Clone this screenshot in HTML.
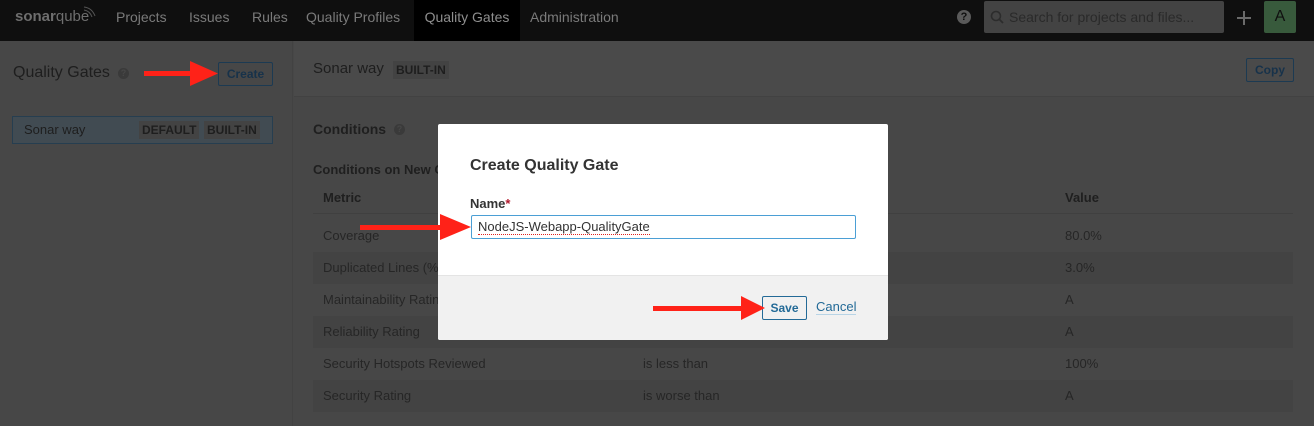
<!DOCTYPE html>
<html style="background:#474747"><head><meta charset="utf-8"><style>
*{box-sizing:border-box;margin:0;padding:0}
html,body{background:#474747}
body{width:1314px;height:426px;overflow:hidden;font-family:"Liberation Sans",Arial,sans-serif;font-size:13px;color:#1f1f1f;position:relative}
.bg{position:absolute;left:0;top:0;width:1314px;height:426px;background:#474747}
.top{position:absolute;left:0;top:0;width:1314px;height:41px;background:#0f0f0f}
.nav{position:absolute;top:0;height:41px;line-height:34px;font-size:14px;color:#7a7a7a}
.abs{position:absolute}
.side{position:absolute;left:0;top:41px;width:293px;height:385px;background:#474747;border-right:1px solid #424242}
.hdr{position:absolute;left:294px;top:41px;width:1020px;height:56px;background:#4a4a4a;border-bottom:1px solid #424242}
.tag{position:absolute;background:#434343;font-weight:bold;font-size:12px;padding:2px 3px;color:#1e1e1e}
.row{position:absolute;left:313px;width:980px;height:32px;line-height:32px}
.row span{position:absolute}
.dark{background:#434343}
.q{position:absolute;width:11px;height:11px;border-radius:50%;background:#3a3a3a;color:#474747;font-size:9px;font-weight:bold;text-align:center;line-height:11px}
.modal{position:absolute;left:438px;top:124px;width:450px;height:216px;background:#fff;border-radius:2px;overflow:hidden}
.foot{position:absolute;left:0;top:151px;width:450px;height:65px;background:#f1f1f1;border-top:1px solid #e4e4e4}
</style></head><body>
<div class="bg"></div>
<div class="top"></div>
<div class="nav" style="left:15px;font-weight:bold;color:#6e6e6e;font-size:15px">sonar<span style="font-weight:normal">qube</span></div>
<svg class="abs" style="left:82px;top:4px" width="16" height="16"><path d="M2 3 Q10 4 13 12 M2 6 Q8 7 10 13" stroke="#555" fill="none"/></svg>
<div class="nav" style="left:116px">Projects</div>
<div class="nav" style="left:189px">Issues</div>
<div class="nav" style="left:252px">Rules</div>
<div class="nav" style="left:306px">Quality Profiles</div>
<div class="nav" style="left:414px;width:106px;background:#000;color:#8e8e8e;text-align:center">Quality Gates</div>
<div class="nav" style="left:530px">Administration</div>
<div class="abs" style="left:957px;top:10px;width:14px;height:14px;border-radius:50%;background:#5a5a5a;color:#0f0f0f;font-size:11px;font-weight:bold;text-align:center;line-height:14px">?</div>
<div class="abs" style="left:984px;top:1px;width:240px;height:32px;background:#434343;border-radius:2px;color:#2a2a2a;font-size:14px;line-height:32px;padding-left:25px">Search for projects and files...</div>
<svg class="abs" style="left:990px;top:10px" width="14" height="14"><circle cx="6" cy="6" r="4.5" stroke="#2c2c2c" stroke-width="1.6" fill="none"/><path d="M9 9 L13 13" stroke="#2c2c2c" stroke-width="1.8"/></svg>
<svg class="abs" style="left:1236px;top:10px" width="16" height="16"><path d="M8 1V15M1 8H15" stroke="#6a6a6a" stroke-width="2"/></svg>
<div class="abs" style="left:1264px;top:1px;width:32px;height:32px;background:#385a3c;border-radius:2px;color:#101010;font-size:16px;text-align:center;line-height:32px">A</div>

<div class="side"></div>
<div class="hdr"></div>
<div class="abs" style="left:13px;top:64px;font-size:16px;color:#1e1e1e">Quality Gates</div>
<div class="q" style="left:118px;top:68px">?</div>
<div class="abs" style="left:218px;top:62px;width:55px;height:24px;border:1px solid #1c3a52;border-radius:2px;color:#17324a;font-weight:bold;font-size:12px;text-align:center;line-height:22px">Create</div>
<div class="abs" style="left:12px;top:116px;width:261px;height:28px;border:1px solid #263e50;background:#414b52"></div>
<div class="abs" style="left:24px;top:122px;color:#1e1e1e">Sonar way</div>
<div class="tag" style="left:139px;top:121px">DEFAULT</div>
<div class="tag" style="left:204px;top:121px">BUILT-IN</div>

<div class="abs" style="left:313px;top:60px;font-size:15px;color:#1e1e1e">Sonar way</div>
<div class="tag" style="left:393px;top:61px">BUILT-IN</div>
<div class="abs" style="left:1246px;top:58px;width:48px;height:24px;border:1px solid #1c3a52;border-radius:2px;color:#17324a;font-weight:bold;font-size:12px;text-align:center;line-height:22px">Copy</div>

<div class="abs" style="left:313px;top:121px;font-size:14px;font-weight:bold">Conditions</div>
<div class="q" style="left:394px;top:124px">?</div>
<div class="abs" style="left:313px;top:162px;font-weight:bold">Conditions on New Code</div>
<div class="row" style="top:182px;border-bottom:1px solid #404040;font-weight:bold"><span style="left:10px">Metric</span><span style="left:752px">Value</span></div>
<div class="row" style="top:220px;color:#262626"><span style="left:10px">Coverage</span><span style="left:752px">80.0%</span></div>
<div class="row dark" style="top:252px;color:#262626"><span style="left:10px">Duplicated Lines (%)</span><span style="left:752px">3.0%</span></div>
<div class="row" style="top:284px;color:#262626"><span style="left:10px">Maintainability Rating</span><span style="left:752px">A</span></div>
<div class="row dark" style="top:316px;color:#262626"><span style="left:10px">Reliability Rating</span><span style="left:752px">A</span></div>
<div class="row" style="top:348px;color:#262626"><span style="left:10px">Security Hotspots Reviewed</span><span style="left:330px">is less than</span><span style="left:752px">100%</span></div>
<div class="row dark" style="top:380px;color:#262626"><span style="left:10px">Security Rating</span><span style="left:330px">is worse than</span><span style="left:752px">A</span></div>

<div class="modal">
 <div class="abs" style="left:32px;top:33px;font-size:16px;font-weight:bold;color:#333">Create Quality Gate</div>
 <div class="abs" style="left:32px;top:72px;font-weight:bold;color:#333">Name<span style="color:#b0182c">*</span></div>
 <div class="abs" style="left:33px;top:91px;width:385px;height:24px;border:1px solid #4b9fd5;border-radius:2px;padding-left:6px;line-height:22px;color:#333"><span style="border-bottom:1px dotted #e02020">NodeJS-Webapp-QualityGate</span></div>
 <div class="foot">
  <div class="abs" style="left:324px;top:20px;width:45px;height:24px;border:1px solid #236a97;border-radius:2px;color:#236a97;font-weight:bold;font-size:12px;text-align:center;line-height:22px">Save</div>
  <div class="abs" style="left:378px;top:24px;color:#236a97;border-bottom:1px solid #b8d4e6;line-height:14px">Cancel</div>
 </div>
</div>

<svg class="abs" style="left:0;top:0" width="1314" height="426">
<g fill="#ff2218">
<rect x="144" y="71" width="50" height="5"/><polygon points="190,61 218,73.5 190,86"/>
<rect x="360" y="225" width="84" height="5"/><polygon points="440,214 471,227 440,240"/>
<rect x="653" y="306" width="92" height="5"/><polygon points="741,296 765,308 741,320"/>
</g></svg>
</body></html>
